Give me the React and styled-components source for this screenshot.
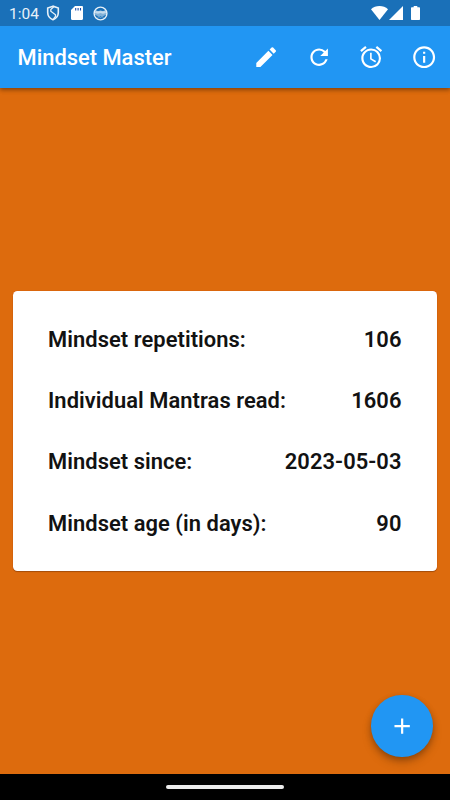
// src/App.jsx
import styled, { createGlobalStyle } from "styled-components";
import { MdAdd, MdAlarm, MdEdit, MdInfoOutline, MdRefresh } from "react-icons/md";

const GlobalStyle = createGlobalStyle`
  body {
    margin: 0;
    font-family: Roboto, sans-serif;
  }
`;

const Screen = styled.div`
  position: relative;
  width: 450px;
  height: 800px;
  display: flex;
  flex-direction: column;
  background: #dd6b0d;
  overflow: hidden;
`;

const StatusBar = styled.div`
  height: 26px;
  box-sizing: border-box;
  display: flex;
  align-items: center;
  justify-content: space-between;
  padding: 0 30px 0 9px;
  background: #1a70b8;
  color: #e8f1f8;
  z-index: 2;
`;

const StatusGroup = styled.div`
  display: flex;
  align-items: center;
`;

const Clock = styled.span`
  width: 37px;
  padding-top: 2px;
  font-size: 15.5px;
  line-height: 24px;
`;

const StatusIcon = styled.svg`
  display: block;
  margin-left: ${({ $gap }) => $gap || 0}px;
`;

const AppBar = styled.header`
  height: 61.5px;
  box-sizing: border-box;
  display: flex;
  align-items: center;
  justify-content: space-between;
  padding-left: 17.5px;
  background: #2196f3;
  color: #fff;
  box-shadow: 0 2px 4px rgba(0, 0, 0, 0.3), 0 1px 6px rgba(0, 0, 0, 0.14);
  z-index: 1;
`;

const Title = styled.h1`
  margin: 0;
  padding-top: 2px;
  font-size: 21.9px;
  font-weight: 500;
  line-height: 26px;
`;

const Actions = styled.div`
  display: flex;
`;

const IconButton = styled.button`
  width: 52.5px;
  height: 52.5px;
  padding: 0;
  border: 0;
  display: flex;
  align-items: center;
  justify-content: center;
  background: none;
  color: inherit;
  font-size: 26.3px;
`;

const Content = styled.main`
  flex: 1;
  display: flex;
  align-items: center;
  padding: 0 13px;
`;

const Card = styled.section`
  flex: 1;
  height: 280px;
  box-sizing: border-box;
  padding: 18px 35.5px 17px 35px;
  border-radius: 4.4px;
  background: #fff;
  box-shadow: 0 1px 1px rgba(0, 0, 0, 0.25), 0 0 1px rgba(190, 30, 0, 0.5);
`;

const Row = styled.div`
  height: 61.25px;
  display: flex;
  align-items: center;
  justify-content: space-between;
  color: #121212;
  font-size: 21.9px;
  font-weight: 600;
  letter-spacing: 0.06px;
  white-space: nowrap;
`;

const Fab = styled.button`
  position: absolute;
  right: 17.5px;
  bottom: 43.5px;
  width: 61.5px;
  height: 61.5px;
  padding: 0;
  border: 0;
  border-radius: 50%;
  display: flex;
  align-items: center;
  justify-content: center;
  background: #2196f3;
  color: #fff;
  font-size: 26.3px;
  box-shadow: 0 3px 6px rgba(0, 0, 0, 0.28), 0 6px 11px rgba(0, 0, 0, 0.12);
`;

const NavBar = styled.footer`
  height: 26px;
  display: flex;
  align-items: center;
  justify-content: center;
  background: #000;
`;

const Handle = styled.div`
  width: 118px;
  height: 4.6px;
  border-radius: 2.3px;
  background: #ececec;
`;

const stats = [
  { label: "Mindset repetitions:", value: "106" },
  { label: "Individual Mantras read:", value: "1606" },
  { label: "Mindset since:", value: "2023-05-03" },
  { label: "Mindset age (in days):", value: "90" },
];

const actions = [
  { name: "Edit", Icon: MdEdit },
  { name: "Refresh", Icon: MdRefresh },
  { name: "Reminder", Icon: MdAlarm },
  { name: "Info", Icon: MdInfoOutline },
];

function ShieldIcon() {
  return (
    <StatusIcon width="14" height="16" viewBox="0 0 14 16" fill="none" stroke="currentColor" strokeWidth="1.6">
      <path d="M7 1.2 1.7 3v4.4c0 3.3 2 5.9 5.3 7.3 3.3-1.4 5.3-4 5.3-7.3V3z" />
      <path d="M8 1.500 4.800 4.500v1.700l4.700 3.600v1.500L7.500 14" strokeWidth="1.3" />
    </StatusIcon>
  );
}

function SdCardIcon() {
  return (
    <StatusIcon $gap={11} width="12" height="14" viewBox="0 0 12 14">
      <path d="M4 0h6.800C11.500 0 12 .5 12 1.200v11.600c0 .7-.5 1.200-1.200 1.200H1.200C.5 14 0 13.500 0 12.800V4z" fill="#fff" />
      <path d="M4.700 2v2.500M7.100 2v2.500M9.500 2v2.500" stroke="#1a4fae" strokeWidth="1.100" />
    </StatusIcon>
  );
}

function FaceIcon() {
  return (
    <StatusIcon $gap={10} width="15" height="15" viewBox="0 0 15 15">
      <circle cx="7.500" cy="7.500" r="6.400" fill="none" stroke="currentColor" strokeWidth="1.400" />
      <path d="M2 5.200h11v3.600L10.500 10h-6L2 8.800z" fill="currentColor" opacity=".5" />
      <path d="M2.500 4 5 5.200 7.500 4.600l2.500.6L12.500 4l.5 3-3 .8-2.500-.8-2.500.8L2 7z" fill="currentColor" opacity=".65" />
      <path d="M4.500 11.200l1.500-.6 1.500.6 1.500-.6 1.500.6" fill="none" stroke="currentColor" strokeWidth=".8" opacity=".7" />
    </StatusIcon>
  );
}

function SystemIcons() {
  return (
    <StatusGroup>
      <StatusIcon width="17" height="14" viewBox="0 0 17 14" fill="#fff">
        <path d="M8.500 14 0 3.300C2.300 1.100 5.200 0 8.500 0S14.700 1.100 17 3.300z" />
      </StatusIcon>
      <StatusIcon $gap={1} width="14" height="14" viewBox="0 0 14 14" fill="#fff">
        <path d="M14 0v14H0z" />
      </StatusIcon>
      <StatusIcon $gap={8} width="9" height="14" viewBox="0 0 9 14" fill="#fff">
        <path d="M2.700 0h3.600v1.300H8c.6 0 1 .4 1 1V13c0 .6-.4 1-1 1H1c-.6 0-1-.4-1-1V2.300c0-.6.4-1 1-1h1.700z" />
      </StatusIcon>
    </StatusGroup>
  );
}

export default function App() {
  return (
    <>
      <GlobalStyle />
      <Screen>
        <StatusBar>
          <StatusGroup>
            <Clock>1:04</Clock>
            <ShieldIcon />
            <SdCardIcon />
            <FaceIcon />
          </StatusGroup>
          <SystemIcons />
        </StatusBar>
        <AppBar>
          <Title>Mindset Master</Title>
          <Actions>
            {actions.map(({ name, Icon }) => (
              <IconButton key={name} aria-label={name}>
                <Icon />
              </IconButton>
            ))}
          </Actions>
        </AppBar>
        <Content>
          <Card>
            {stats.map(({ label, value }) => (
              <Row key={label}>
                <span>{label}</span>
                <span>{value}</span>
              </Row>
            ))}
          </Card>
        </Content>
        <NavBar>
          <Handle />
        </NavBar>
        <Fab aria-label="Add">
          <MdAdd />
        </Fab>
      </Screen>
    </>
  );
}
